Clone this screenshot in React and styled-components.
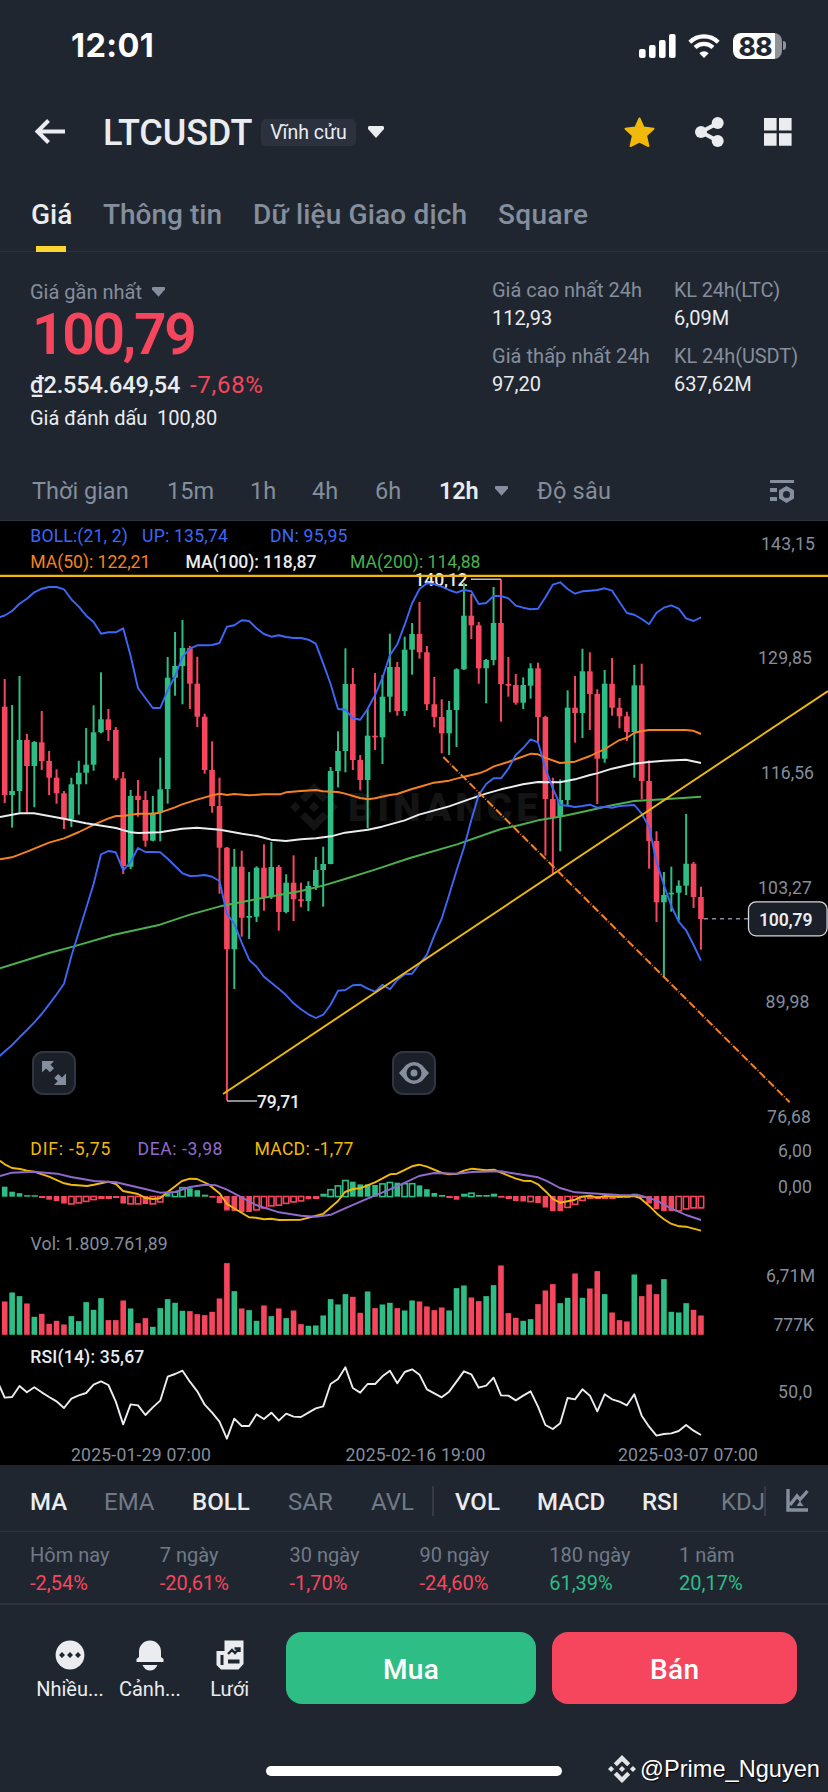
import React from "react";
import styled, { createGlobalStyle } from "styled-components";

const GREEN = "#2ebd85";
const RED = "#f6465d";
const YELLOW = "#f0b90b";
const BLUE = "#3d67f5";
const ORANGE = "#f58220";
const PURPLE = "#8f6bce";
const GRAY = "#848e9c";
const LIGHT = "#eaecef";

const GlobalStyle = createGlobalStyle`
  * {
    box-sizing: border-box;
  }
  body {
    margin: 0;
    background: #202630;
    font-family: Roboto, "Noto Sans", sans-serif;
    color: ${LIGHT};
  }
`;

const Screen = styled.div`
  width: 828px;
  height: 1792px;
  overflow: hidden;
  display: flex;
  flex-direction: column;
  background: #202630;
`;

/* one line of text, width keeps the columns in place */
const Text = styled.span`
  display: block;
  flex: none;
  width: ${(p) => (p.$w ? p.$w + "px" : "auto")};
  margin-left: ${(p) => p.$ml || 0}px;
  font-size: ${(p) => p.$size || 20}px;
  line-height: ${(p) => p.$line || 28}px;
  font-weight: ${(p) => p.$weight || 400};
  letter-spacing: ${(p) => p.$ls || 0}px;
  color: ${(p) => p.$color || LIGHT};
  white-space: nowrap;
`;

const StatusBar = styled.div`
  height: 90px;
  padding: 1px 42px 0 71px;
  display: flex;
  align-items: center;
  justify-content: space-between;
`;

const Clock = styled.span`
  font: 700 32.5px/40px Inter, sans-serif;
  letter-spacing: 0.4px;
  color: #fff;
`;

const StatusIcons = styled.div`
  display: flex;
  align-items: center;
  gap: 12.5px;
`;

const Battery = styled.div`
  width: 49px;
  height: 26px;
  border-radius: 8px;
  background: linear-gradient(90deg, #fff 42px, #8f9297 42px);
  color: #202630;
  font: 800 26px/27px Inter, sans-serif;
  letter-spacing: -0.4px;
  padding-left: 6px;
`;

const BatteryTip = styled.span`
  width: 3px;
  height: 9px;
  margin-left: -11px;
  border-radius: 0 4px 4px 0;
  background: #8f9297;
`;

const Header = styled.header`
  height: 84px;
  padding: 0 36px 0 34px;
  display: flex;
  align-items: center;
`;

const BackIcon = styled.svg`
  width: 32px;
  height: 26px;
  margin-right: 37px;
`;

const Title = styled(Text)`
  padding-top: 2px;
`;

const Badge = styled.span`
  width: 95px;
  height: 27px;
  margin: 0 12px 0 10px;
  border-radius: 5px;
  background: #2b323d;
  font-size: 19.5px;
  line-height: 27px;
  text-align: center;
`;

const Caret = styled.svg`
  flex: none;
  width: ${(p) => p.$w || 14}px;
  height: ${(p) => (p.$w || 14) * 0.75}px;
  fill: ${(p) => p.$color || GRAY};
`;

const HeaderActions = styled.div`
  margin-left: auto;
  display: flex;
  align-items: center;
  gap: 40px;
`;

const Tabs = styled.nav`
  height: 78px;
  padding-left: 31px;
  display: flex;
  border-bottom: 1px solid #2b323d;
`;

const Tab = styled.div`
  width: ${(p) => p.$w}px;
  padding-top: 23px;
  height: 78px;
`;

const Underline = styled.div`
  width: 30px;
  height: 6px;
  margin: 13px 0 0 5px;
  background: #fcd535;
`;

const PriceSection = styled.section`
  height: 208px;
  padding: 24px 0 0 30px;
  display: flex;
`;

const PriceMain = styled.div`
  width: 462px;
`;

const Line = styled.div`
  display: flex;
  align-items: center;
  gap: ${(p) => p.$gap || 0}px;
  padding-top: ${(p) => p.$top || 0}px;
`;

const Stats = styled.div`
  display: grid;
  grid-template-columns: 182px auto;
  grid-auto-rows: 66px;
`;

const Intervals = styled.nav`
  height: 60px;
  padding: 2px 0 0 32px;
  display: flex;
  align-items: center;
`;

const SettingsIcon = styled.svg`
  width: 26px;
  height: 24px;
  margin-left: auto;
  margin-right: 33px;
`;

const ChartArea = styled.div`
  position: relative;
  height: 945px;
  background: #000;
  border-top: 1px solid #2b323d;
`;

const ChartSvg = styled.svg`
  display: block;
  width: 828px;
  height: 945px;
  margin-top: -1px;
`;

const ChartButton = styled.button`
  position: absolute;
  left: ${(p) => p.$left}px;
  top: 530px;
  width: 44px;
  height: 44px;
  padding: 0;
  display: grid;
  place-items: center;
  border: 2px solid #2f3641;
  border-radius: 11px;
  background: #1a1f28;
`;

const IndicatorBar = styled.div`
  height: 67px;
  padding: 5px 0 0 30px;
  display: flex;
  align-items: center;
  border-bottom: 1px solid #2d343e;
`;

const Indicator = styled(Text)`
  padding-top: 3px;
`;

const Divider = styled.span`
  width: 2px;
  height: 30px;
  margin-right: ${(p) => p.$mr}px;
  background: #343b46;
`;

const Returns = styled.div`
  height: 73px;
  padding: 9px 0 0 30px;
  display: grid;
  grid-template-columns: repeat(6, 129.8px);
  border-bottom: 2px solid #2d343e;
`;

const ActionBar = styled.footer`
  height: 126px;
  padding: 27px 31px 0 30px;
  display: flex;
`;

const Shortcut = styled.div`
  width: 80px;
  padding-top: 7px;
  display: flex;
  flex-direction: column;
  align-items: center;
  gap: 4px;
`;

const TradeButton = styled.button`
  width: ${(p) => p.$w}px;
  height: 72px;
  margin-left: ${(p) => p.$ml}px;
  border: 0;
  border-radius: 16px;
  background: ${(p) => p.$color};
  color: #fff;
  font: 500 28px/1 Roboto, sans-serif;
  letter-spacing: 0.3px;
  padding-top: 4px;
`;

const HomeArea = styled.div`
  flex: 1;
  padding: 14px 8px 0 266px;
  display: flex;
  align-items: center;
  justify-content: space-between;
`;

const HomeIndicator = styled.div`
  width: 296px;
  height: 10px;
  margin-top: 5px;
  border-radius: 5px;
  background: #fff;
`;

const Author = styled.div`
  display: flex;
  align-items: center;
  gap: 4px;
  color: #fff;
  font: 23.6px/28px "Liberation Sans", Arial, sans-serif;
  text-shadow: 1px 1px 1px #000;
`;

// candle: [up, high, body top, body bottom, low]
const candles = [
  [0, 679, 706.7, 795, 803], [1, 705, 791, 795, 827.7], [1, 676, 740, 791, 812.7],
  [0, 734, 740, 766, 813.3], [1, 741, 742, 766, 807.3], [0, 711, 742.3, 761, 770],
  [0, 751, 761, 777.7, 795], [0, 769.3, 777.7, 793.3, 803.7], [0, 791, 793.3, 819.7, 829],
  [1, 777.7, 784.3, 819, 827], [1, 760.7, 772.7, 784.3, 814.7], [1, 728, 764.7, 772.7, 784.3],
  [1, 705.3, 732.3, 764.7, 770.7], [1, 672.3, 719.3, 732.3, 733.3], [0, 709, 719.3, 730, 741],
  [0, 727, 730, 778.3, 780.3], [0, 772, 778.3, 866, 874], [1, 790, 796, 866.7, 869],
  [0, 780, 795.7, 800, 816.7], [0, 791, 800, 840.7, 846.7], [1, 796, 812.7, 840.7, 841.3],
  [1, 757.7, 789.3, 812.7, 841.3], [1, 657, 677.7, 789, 803.7], [1, 632, 666, 677.7, 695.7],
  [1, 620, 648, 666, 704.3], [0, 646, 648, 683.7, 709], [0, 656.7, 683.7, 716.7, 727],
  [0, 713.7, 716.7, 770, 773.7], [0, 741.3, 770, 806, 812.7], [0, 777.7, 806, 847.7, 893.7],
  [0, 847, 847.7, 949.3, 1100.7], [1, 849, 866.7, 949.3, 989], [0, 850.7, 866.7, 917.7, 936.7],
  [1, 872, 916, 917.7, 939], [1, 866.3, 867.7, 916.7, 922], [0, 844.3, 867.7, 897, 910.7],
  [1, 842, 867, 897.3, 899], [0, 865, 867, 912, 930.7], [1, 874.3, 882.7, 912, 913.3],
  [0, 855.3, 882.7, 899.3, 921], [0, 882.7, 899.3, 901, 907], [1, 881.3, 886, 901, 911],
  [1, 857, 870, 886, 890], [1, 846.7, 864, 870, 906.7], [1, 767, 771, 864, 864.3],
  [1, 731.3, 751, 771, 787.3], [1, 648.3, 684, 751, 772.3], [0, 668, 684, 760, 770],
  [0, 755, 760, 780, 790.3], [1, 709, 735.7, 780, 828.3], [0, 673, 735.7, 737.3, 750],
  [1, 675, 696.7, 737.3, 764], [1, 633.7, 667, 696.7, 712.3], [0, 662, 667, 711, 715.7],
  [1, 636.7, 649.7, 711, 716], [1, 623, 634, 649.7, 674.7], [0, 602, 634, 652.3, 658.7],
  [0, 646, 652.3, 704.3, 710], [0, 677, 704.3, 717, 727.3], [0, 699.3, 717, 733.3, 753.3],
  [1, 701, 710, 733.3, 755], [1, 668.3, 669.3, 710, 747], [1, 583, 615.7, 669.3, 670],
  [0, 594, 615.7, 625.3, 639], [0, 622, 625.3, 668.3, 683.7], [1, 659, 660, 668.3, 703.3],
  [1, 587, 623, 660, 665.3], [0, 579.3, 623, 684, 721.7], [0, 657, 684, 685.7, 696.7],
  [0, 674, 685, 702.7, 704.7], [1, 677.3, 685, 702.7, 709], [1, 663.3, 668.3, 685.7, 698.7],
  [0, 662.7, 668.3, 717, 742], [0, 715.7, 717, 799, 855.7], [0, 777.7, 799, 817.3, 874],
  [1, 779.3, 800, 816.7, 851.3], [1, 690.3, 707.7, 800, 805.7], [0, 676, 707.7, 713, 742.7],
  [1, 648.7, 671.3, 713, 738], [0, 652.3, 671.3, 694, 730], [0, 689.3, 694, 758.7, 804],
  [1, 670, 683.7, 758.7, 762.7], [0, 658, 683.7, 707.7, 715.7], [0, 698, 707.7, 716.3, 728.3],
  [0, 711.7, 716.3, 732, 741], [1, 665, 685.3, 732, 777.7], [0, 663.7, 685.3, 781, 799.3],
  [0, 760.3, 781, 841, 868.7], [0, 831.3, 841, 902.3, 922], [1, 872, 895, 902.3, 977.7],
  [1, 866.7, 892.7, 894, 911.7], [1, 880.3, 885.7, 892.7, 920.7], [1, 814, 863.7, 885.7, 895],
  [0, 862, 863.7, 897, 908], [0, 886.7, 897, 919, 949.7],
];

// per-candle series, the first value belongs to the candle left of the edge
const bollUp = [
  618, 615.5, 611, 603.7, 598.7, 592.3, 588.7, 587, 587, 589.3, 599.3, 606.7, 615.7, 622, 633.7, 632.3,
  632.3, 628.3, 655.7, 688, 698, 708, 708, 690.3, 676, 657, 648.7, 645.3, 645.3, 645, 643, 626.7,
  625.3, 620.3, 621, 628.3, 634, 636.7, 635.3, 637, 638, 638, 639.7, 643.7, 663.3, 684, 709, 709.7,
  718.3, 719.7, 709, 695, 677.7, 655.3, 644.3, 624.7, 603.3, 589, 583.3, 584.3, 586.7, 590, 592.7, 590,
  591.3, 604, 603, 596, 596, 598.3, 605.7, 607.7, 609.3, 608.7, 597.3, 584.7, 582.3, 589, 593.7, 591.3,
  590.7, 590, 588.3, 590.7, 602, 613, 614.7, 619, 624.3, 612.7, 607.7, 605.3, 608.7, 618.3, 621, 617.3,
];

const bollDown = [
  1058, 1051.5, 1045, 1037.3, 1030, 1022.3, 1014, 1004.3, 994.5, 983.7, 956, 932, 908, 884, 854.3, 851,
  852.3, 870.3, 862, 848, 852, 852, 852.3, 858.7, 866, 873.3, 876, 875.7, 875, 876.7, 881, 913.7,
  923.7, 942.7, 959.7, 966.7, 976.7, 982.7, 988.7, 995.3, 1003.3, 1009.3, 1014.3, 1018, 1014.7, 1004.7, 990.7, 990,
  985.3, 984.7, 988.7, 991.7, 984.7, 989.3, 980, 974.3, 973.7, 964, 954.7, 935.7, 918.7, 895, 870.7, 847.7,
  820, 795, 784, 778.3, 778.3, 768.7, 755, 748, 739.3, 742.3, 768.3, 788.3, 805, 805.7, 807, 806,
  804.7, 807.7, 806.7, 807.7, 806, 805.5, 805, 813.7, 827, 861.7, 885, 906, 921.7, 930.3, 945, 960.7,
];

const rsi = [
  753, 803, 801, 768, 787, 772, 787, 801, 814, 834, 806, 796, 789, 764, 754, 765, 815, 883, 823, 826,
  855, 832, 812, 740, 732, 722, 755, 784, 824, 848, 875, 926, 866, 888, 888, 853, 867, 848, 872, 851,
  860, 861, 848, 835, 829, 762, 747, 712, 774, 788, 762, 762, 739, 722, 760, 726, 718, 734, 778, 790,
  802, 785, 755, 724, 733, 773, 767, 743, 796, 797, 811, 797, 784, 830, 885, 897, 880, 804, 808, 778,
  797, 844, 793, 808, 815, 826, 793, 857, 890, 917, 912, 910, 903, 885, 902, 915,
].map((v) => 1130 + v / 3);

const volume = [
  100, 127, 116, 94, 54, 63, 33, 42, 31, 56, 41, 98, 75, 110, 44, 44, 103, 79, 35, 50, 24, 80, 107, 96,
  72, 71, 62, 59, 69, 109, 215, 131, 79, 74, 42, 88, 56, 79, 50, 73, 32, 27, 28, 58, 107, 91, 122, 114,
  66, 130, 80, 91, 96, 80, 73, 103, 100, 85, 74, 82, 73, 140, 148, 112, 101, 116, 149, 208, 65, 51, 42,
  47, 92, 133, 152, 95, 111, 184, 111, 139, 191, 122, 67, 44, 40, 181, 116, 151, 122, 167, 69, 67, 95, 75, 58,
];

const macd = [
  10, 5, 3.5, 1.5, 1.5, -2, -3.7, -5, -7.5, -8, -7, -5.5, -3.7, -3, -3, -2, -7.5, -8, -8, -8, -8, -6,
  3.5, 5, 9.5, 8.5, 6.5, 2, -1.7, -7, -14.5, -15, -16, -16, -14, -12, -10, -9.3, -7.5, -6, -5, -3.3, -3,
  3, 7.5, 11.3, 16.7, 15, 12.3, 12.3, 11.7, 13.3, 14.7, 14, 13.5, 13.5, 11.3, 7.5, 3.7, 1.7, -2, -3.7,
  3, 4, 1.7, 1.7, 3, -1.7, -3, -5, -5.5, -5.7, -7, -11.5, -15, -15, -11.5, -8.5, -4.5, -3, -3, -3, -3,
  -2, -2, 3, -2, -7.5, -13, -15, -15, -15, -13, -12, -12,
];

const hollow = [
  9, 10, 11, 12, 17, 18, 20, 21, 23, 24, 34, 35, 36, 37, 38, 39, 40, 44, 45, 46, 51, 52, 54, 55, 63, 71,
  76, 77, 78, 91, 92, 93, 94,
];

const ma50 =
  "0,859.3 12,857.3 27,851.7 49,842.7 64,838.3 79,832 94,824.7 108,818.7 116,816 123,816 138,813.7 153,813.7 160,812.7 175,807.3 182,804.3 197,799.7 212,795.3 220,793.7 227,795 234,794 249,795.3 264,794.3 280,794.3 286,792.3 301,791 316,790 323,791.3 338,792 345,793.7 360,798 368,799.3 375,798.3 390,795 397,794 412,789 419,787 434,782.7 449,780.7 464,776.7 479,773.3 486,770.7 494,766.3 508,762 516,759 531,753.7 538,754.3 545,757.7 560,763 575,761.7 590,756 605,749 619,740.3 627,737.7 634,733 642,731 649,730 686,730 693,730.7 701,734";
const ma100 =
  "0,817 20,813.3 34,813.3 64,818.7 86,823.3 116,828 131,832.3 138,833 160,832.3 182,828.7 197,827.7 220,829.7 242,833.7 257,836 271,839.7 286,841 301,839.3 316,838.3 331,836.3 345,832.7 368,829.7 382,826.7 404.7,820.3 419,814.7 449,806.3 471,798.7 486,793.7 501,789.3 523,784.3 538,782 560,782.3 575,779.3 590,775 597,773.3 612,768.7 634,763.7 649,762 664,760.7 686,759.7 701,763";
const ma200 =
  "0,968.3 49,953 73,946.7 113,935 160,924.7 190,914.7 220,906.3 257,899 301,891 323,885.7 345,879 375,869.7 410,858 457,844.3 501,829 520,825 538,820.3 560,816.7 590,810.3 612,805.3 634,801 664,799.3 701,796.7";
const dif =
  "0,1160.7 4.7,1164.3 12,1168 20,1169 27,1170.7 34,1171.7 49,1176.7 64,1183.3 71,1184.7 87,1186 94,1184.7 108,1181.7 116,1184 123,1191 138,1194 145,1197.7 153,1199 160,1198.3 168,1191.7 182,1181 190,1178.7 197,1179 208,1184 220,1193.7 227,1204 242,1213 249,1217.3 256,1217.7 264,1219.3 271,1218.7 279,1220 301,1219.7 323,1214 338,1201 345,1192 353,1189 360,1188.3 375,1182.3 390,1174.3 397,1173.7 412,1166.3 419,1164.7 427,1166.7 442,1173 449,1174.3 457,1173.7 464,1170.7 472,1168.7 486,1170.3 494,1169.7 501,1172.7 516,1178.7 523,1180.7 531,1181 538,1184.3 546,1191.7 553,1199 560,1202.7 575,1199.7 582,1196.7 590,1195.7 597,1197.7 605,1196 619,1196.7 634,1196 640,1198 649,1205.7 657,1213.7 664,1219.3 671,1223.7 679,1226.3 686,1226.7 701,1230.7";
const dea =
  "0,1176 12,1172.7 34,1171.7 57,1173.7 71,1177 94,1181 116,1182.3 145,1189 160,1192.7 175,1192 190,1187 205,1184.7 216,1185.3 227,1189.7 242,1197.7 256,1205 279,1212.3 301,1215.7 316,1216.7 331,1214.7 345,1208.3 368,1198.3 390,1189.3 405,1182.7 419,1176 434,1173 457,1173.7 472,1172 501,1171.3 516,1173.7 538,1177.3 546,1180.7 560,1188 575,1192.3 590,1193.3 619,1195 640,1195.3 657,1200.7 671,1208.3 686,1215 701,1220";

// [text, x, baseline, width, color, weight]
const chartLabels = [
  ["BOLL:(21, 2)", 30.3, 542.3, 97.5, BLUE],
  ["UP: 135,74", 142, 542.3, 86, BLUE],
  ["DN: 95,95", 270, 542.3, 77.5, BLUE],
  ["MA(50): 122,21", 30.3, 568.3, 120, ORANGE],
  ["MA(100): 118,87", 185.5, 568.3, 131, LIGHT, 500],
  ["MA(200): 114,88", 350, 568.3, 130.5, "#4caf50"],
  ["143,15", 761, 550, 54, GRAY],
  ["129,85", 758, 664.3, 54, GRAY],
  ["116,56", 761, 779.3, 53, GRAY],
  ["103,27", 758, 893.7, 54, GRAY],
  ["89,98", 765.5, 1008.3, 44, GRAY],
  ["76,68", 767, 1123.3, 44, GRAY],
  ["6,00", 778, 1157, 34, GRAY],
  ["0,00", 778, 1193, 34, GRAY],
  ["6,71M", 766, 1281.7, 49, GRAY],
  ["777K", 773.5, 1331.3, 40.5, GRAY],
  ["50,0", 778, 1398, 34.5, GRAY],
  ["DIF: -5,75", 30.3, 1155.3, 80, YELLOW],
  ["DEA: -3,98", 137.5, 1155.3, 85, PURPLE],
  ["MACD: -1,77", 254.5, 1155.3, 99, YELLOW],
  ["Vol: 1.809.761,89", 30.6, 1249.7, 137, GRAY],
  ["RSI(14): 35,67", 30.3, 1363.3, 114, LIGHT, 500],
  ["2025-01-29 07:00", 71, 1461, 140, GRAY],
  ["2025-02-16 19:00", 345.5, 1461, 140, GRAY],
  ["2025-03-07 07:00", 618, 1461, 140, GRAY],
];

const cx = (i) => 4.7 + i * 7.407;
const series = (values) => values.map((v, i) => `${cx(i - 1).toFixed(1)},${v}`).join(" ");

const ChartLabel = ({ label: [text, x, y, w, color, weight] }) => (
  <text x={x} y={y} textLength={w} fill={color} fontSize="17.6" fontWeight={weight || 400}>
    {text}
  </text>
);

const Curve = ({ points, color }) => (
  <polyline points={points} fill="none" stroke={color} strokeWidth="1.9" strokeLinejoin="round" />
);

const BinanceMark = ({ size, color, ...rest }) => (
  <svg width={size} height={size} viewBox="0 0 32 32" fill={color} {...rest}>
    <path d="M16 0 25.4 9.4 21.9 12.9 16 7 10.1 12.9 6.6 9.4ZM16 32 25.4 22.6 21.9 19.1 16 25 10.1 19.1 6.6 22.6ZM3.5 12.5 7 16 3.5 19.5 0 16ZM28.5 12.5 32 16 28.5 19.5 25 16ZM16 12.5 19.5 16 16 19.5 12.5 16Z" />
  </svg>
);

const Chart = () => (
  <ChartSvg viewBox="0 520 828 945">
    <BinanceMark x="290" y="783" size={48} color="#141414" />
    <text x="348" y="821" textLength="190" fontSize="39" fontWeight="900" fill="#141414">
      BINANCE
    </text>
    <ChartLabel label={["140,12", 414.5, 586, 53, LIGHT, 500]} />
    <ChartLabel label={["79,71", 257, 1107.7, 43, LIGHT, 500]} />
    {candles.map(([up, high, top, bottom, low], i) => (
      <g key={i} fill={up ? GREEN : RED}>
        <rect x={cx(i) - 1} y={high} width="2" height={low - high} />
        <rect x={cx(i) - 2.8} y={top} width="5.6" height={Math.max(bottom - top, 1.7)} />
      </g>
    ))}
    <Curve points={ma50} color={ORANGE} />
    <Curve points={ma100} color={LIGHT} />
    <Curve points={ma200} color="#4caf50" />
    <Curve points={series(bollUp)} color={BLUE} />
    <Curve points={series(bollDown)} color={BLUE} />

    <path d="M471 579.2H501M227 1101H257" stroke="#b7bdc6" strokeWidth="1.4" />
    <path d="M0 575.8H828" stroke={YELLOW} strokeWidth="2.2" />
    <path d="M223 1094 828 691" stroke={YELLOW} strokeWidth="1.9" />
    <path d="M443.3 757 789.7 1102.3" stroke={ORANGE} strokeWidth="2" strokeDasharray="8 1.8 0.8 1.8" />
    <path d="M704 918.7H748" stroke={GRAY} strokeWidth="1.4" strokeDasharray="4 4" />

    {macd.map((v, i) => {
      const color = v > 0 ? GREEN : RED;
      const top = v > 0 ? 1196.7 - v : 1196;
      return hollow.includes(i) ? (
        <rect
          key={i}
          x={cx(i) - 2.7}
          y={top + 0.5}
          width="5.4"
          height={Math.max(Math.abs(v) - 0.6, 1)}
          fill="none"
          stroke={color}
          strokeWidth="1.6"
        />
      ) : (
        <rect key={i} x={cx(i) - 2.8} y={top} width={Math.abs(v) < 3.2 ? 6.4 : 5.6} height={Math.abs(v)} fill={color} />
      );
    })}
    <Curve points={dif} color={YELLOW} />
    <Curve points={dea} color={PURPLE} />
    {volume.map((v, i) => (
      <rect key={i} x={cx(i) - 2.8} y={1334.8 - v / 3} width="5.6" height={v / 3} fill={candles[i][0] ? GREEN : RED} />
    ))}
    <Curve points={series(rsi)} color={LIGHT} />

    {chartLabels.map((label) => (
      <ChartLabel key={label[0]} label={label} />
    ))}
    <rect x="748.5" y="901.8" width="78.6" height="34" rx="7.5" fill="#1a1f28" stroke="#d5d8dc" strokeWidth="1.3" />
    <ChartLabel label={["100,79", 759, 925.8, 53.5, LIGHT, 600]} />
  </ChartSvg>
);

const Down = (props) => (
  <Caret viewBox="0 0 16 12" {...props}>
    <path d="M1 0H15Q16 0 16 1.5V3L8 12 0 3V1.5Q0 0 1 0Z" />
  </Caret>
);

const stats = [
  ["Giá cao nhất 24h", "112,93", 0],
  ["KL 24h(LTC)", "6,09M", -0.2],
  ["Giá thấp nhất 24h", "97,20", 0.05],
  ["KL 24h(USDT)", "637,62M", -0.1],
];

const tabs = [
  ["Giá", 72, 0, true],
  ["Thông tin", 150, 0],
  ["Dữ liệu Giao dịch", 245, 0.17],
  ["Square", 120, 0.4],
];

const intervals = [
  ["Thời gian", 135],
  ["15m", 83],
  ["1h", 62],
  ["4h", 63],
  ["6h", 64],
];

const returns = [
  ["Hôm nay", "-2,54%"],
  ["7 ngày", "-20,61%"],
  ["30 ngày", "-1,70%"],
  ["90 ngày", "-24,60%"],
  ["180 ngày", "61,39%"],
  ["1 năm", "20,17%"],
];

const indicators = [
  ["MA", 74, true],
  ["EMA", 88],
  ["BOLL", 96, true],
  ["SAR", 83],
  ["AVL", 61],
  null,
  ["VOL", 82, true],
  ["MACD", 105, true],
  ["RSI", 79, true],
  ["KDJ", 43],
];

export default function App() {
  return (
    <Screen>
      <GlobalStyle />
      <StatusBar>
        <Clock>12:01</Clock>
        <StatusIcons>
          <svg width="37" height="24" fill="#fff">
            <rect x="0" y="15" width="6.6" height="9" rx="2" />
            <rect x="10" y="11" width="6.6" height="13" rx="2" />
            <rect x="20" y="6" width="6.6" height="18" rx="2" />
            <rect x="30" y="0" width="6.6" height="24" rx="2" />
          </svg>
          <svg width="32" height="24" viewBox="0 0 32 24">
            <path d="M1.8 8.2A20.2 20.2 0 0 1 30.2 8.2M7.1 13.6A12.7 12.7 0 0 1 24.9 13.6" fill="none" stroke="#fff" strokeWidth="4.2" />
            <path d="M16 24 11.3 19.2A6.7 6.7 0 0 1 20.7 19.2Z" fill="#fff" />
          </svg>
          <Battery>88</Battery>
          <BatteryTip />
        </StatusIcons>
      </StatusBar>

      <Header>
        <BackIcon viewBox="0 0 32 26" fill="none" stroke={LIGHT} strokeWidth="4">
          <path d="M31 12.5H4M14.5 1.5 3.5 12.5 14.5 23.5" />
        </BackIcon>
        <Title $size={36} $weight={500} $line={44} $w={148} $ls={-0.1}>
          LTCUSDT
        </Title>
        <Badge>Vĩnh cửu</Badge>
        <Down $w={16} $color={LIGHT} />
        <HeaderActions>
          <svg width="31" height="31" viewBox="0 0 31 31" fill={YELLOW} stroke={YELLOW} strokeWidth="2" strokeLinejoin="round">
            <path d="M15.5 1.5 19.6 10.6 29.5 11.7 22.1 18.6 24.4 29 15.5 24.6 6.6 29 8.9 18.6 1.5 11.7 11.4 10.6Z" />
          </svg>
          <svg width="29" height="30" viewBox="0 0 29 30" fill={LIGHT}>
            <path d="M23 6 6 15 23 24" fill="none" stroke={LIGHT} strokeWidth="4" />
            <circle cx="6" cy="15" r="6" />
            <circle cx="22.7" cy="6" r="6" />
            <circle cx="22.7" cy="24" r="6" />
          </svg>
          <svg width="28" height="28" fill={LIGHT}>
            <path d="M0 0H12.6V12.6H0ZM15 0H27.6V12.6H15ZM0 15.2H12.6V27.8H0ZM15 15.2H27.6V27.8H15Z" />
          </svg>
        </HeaderActions>
      </Header>

      <Tabs>
        {tabs.map(([name, w, ls, active]) => (
          <Tab key={name} $w={w}>
            <Text $size={28} $weight={500} $line={36} $ls={ls} $color={active ? LIGHT : GRAY}>
              {name}
            </Text>
            {active && <Underline />}
          </Tab>
        ))}
      </Tabs>

      <PriceSection>
        <PriceMain>
          <Line $gap={11} $top={2}>
            <Text $color={GRAY} $w={111}>
              Giá gần nhất
            </Text>
            <Down $w={13} />
          </Line>
          <Text $size={57} $weight={600} $line={58} $color={RED} $ls={-2.3} $ml={2}>
            100,79
          </Text>
          <Line $gap={10} $top={7}>
            <Text $size={23.5} $weight={500} $w={150} $ls={-0.15}>
              ₫2.554.649,54
            </Text>
            <Text $size={24} $ls={0.7} $color={RED}>
              -7,68%
            </Text>
          </Line>
          <Line $gap={10} $top={5}>
            <Text $w={117}>Giá đánh dấu</Text>
            <Text>100,80</Text>
          </Line>
        </PriceMain>
        <Stats>
          {stats.map(([name, value, ls]) => (
            <div key={name}>
              <Text $color={GRAY} $ls={ls}>
                {name}
              </Text>
              <Text>{value}</Text>
            </div>
          ))}
        </Stats>
      </PriceSection>

      <Intervals>
        {intervals.map(([name, w]) => (
          <Text key={name} $size={23.5} $color={GRAY} $w={w}>
            {name}
          </Text>
        ))}
        <Text $size={23.5} $weight={600} $w={56} $ls={-0.2}>
          12h
        </Text>
        <Down $w={13} />
        <Text $size={23.5} $color={GRAY} $ml={29} $ls={0.2}>
          Độ sâu
        </Text>
        <SettingsIcon viewBox="0 0 26 24" fill={GRAY}>
          <path d="M1 1H25V4H1ZM1 9H8V13H1ZM1 18H8V22H1Z" />
          <path fillRule="evenodd" d="M17.5 7 25 11.2V19.6L17.5 24 10 19.6V11.2ZM17.5 12A3.5 3.5 0 1 0 17.5 19 3.5 3.5 0 1 0 17.5 12Z" />
        </SettingsIcon>
      </Intervals>

      <ChartArea>
        <Chart />
        <ChartButton $left={32}>
          <svg width="26" height="26" viewBox="0 0 26 26" fill={GRAY}>
            <path d="M1 1H13L9.5 4.7 13 8.2 9 12.2 5 8.5 1 12.5ZM25 25H13L16.7 21.3 13.2 18 17.2 14 21 17.5 25 13.5Z" />
          </svg>
        </ChartButton>
        <ChartButton $left={392}>
          <svg width="30" height="22" viewBox="0 0 30 22" fill={GRAY}>
            <path fillRule="evenodd" d="M0 11 7 3Q15-3 23 3L30 11 23 19Q15 25 7 19ZM15 3.5A7.5 7.5 0 1 0 15 18.5 7.5 7.5 0 1 0 15 3.5Z" />
            <circle cx="15" cy="11" r="3.5" />
          </svg>
        </ChartButton>
      </ChartArea>

      <IndicatorBar>
        {indicators.map((item) =>
          item ? (
            <Indicator
              key={item[0]}
              $size={24}
              $w={item[1]}
              $weight={item[2] ? 500 : 400}
              $color={item[2] ? LIGHT : "#717a87"}
            >
              {item[0]}
            </Indicator>
          ) : (
            <Divider key="divider" $mr={21} />
          )
        )}
        <Divider $mr={20} />
        <svg width="23" height="24" viewBox="0 0 23 24" fill="none" stroke={GRAY} strokeWidth="3.4">
          <path d="M2 0V21H22M4 16 11 7 14 10.5 21.5 2" />
          <path d="M14 12 17.5 17H10.5Z" fill={GRAY} stroke="none" />
        </svg>
      </IndicatorBar>

      <Returns>
        {returns.map(([name, value]) => (
          <div key={name}>
            <Text $color="#717a87">{name}</Text>
            <Text $color={value[0] === "-" ? RED : GREEN}>{value}</Text>
          </div>
        ))}
      </Returns>

      <ActionBar>
        <Shortcut>
          <svg width="32" height="32" viewBox="0 0 32 32">
            <circle cx="16" cy="16" r="14.4" fill={LIGHT} />
            <path d="M5 16 8 13 11 16 8 19ZM13 16 16 13 19 16 16 19ZM21 16 24 13 27 16 24 19Z" fill="#202630" />
          </svg>
          <Text>Nhiều...</Text>
        </Shortcut>
        <Shortcut>
          <svg width="32" height="32" viewBox="0 0 32 32" fill={LIGHT}>
            <path d="M5 18V12.5A11 11 0 0 1 27 12.5V18L29.5 20V23H2.5V20ZM8.5 26H23.5Q21 31.5 16 31.5T8.5 26Z" />
          </svg>
          <Text>Cảnh...</Text>
        </Shortcut>
        <Shortcut>
          <svg width="32" height="32" viewBox="0 0 32 32" fill={LIGHT}>
            <path fillRule="evenodd" d="M10.5 1.5H29.5V25L24.5 30.5H7L2.5 26V12H10.5ZM6.5 16V26H9.5V16ZM14 20.5V24.5H25.5V20.5Z" />
            <path d="M14 15 18 11 21 14 25 9.5M20.5 9.5H25.5V13" fill="none" stroke="#202630" strokeWidth="2.4" />
          </svg>
          <Text>Lưới</Text>
        </Shortcut>
        <TradeButton $w={251} $ml={16} $color={GREEN}>
          Mua
        </TradeButton>
        <TradeButton $w={245} $ml={16} $color={RED}>
          Bán
        </TradeButton>
      </ActionBar>

      <HomeArea>
        <HomeIndicator />
        <Author>
          <BinanceMark size={28} color="#e3e4e6" />
          @Prime_Nguyen
        </Author>
      </HomeArea>
    </Screen>
  );
}
